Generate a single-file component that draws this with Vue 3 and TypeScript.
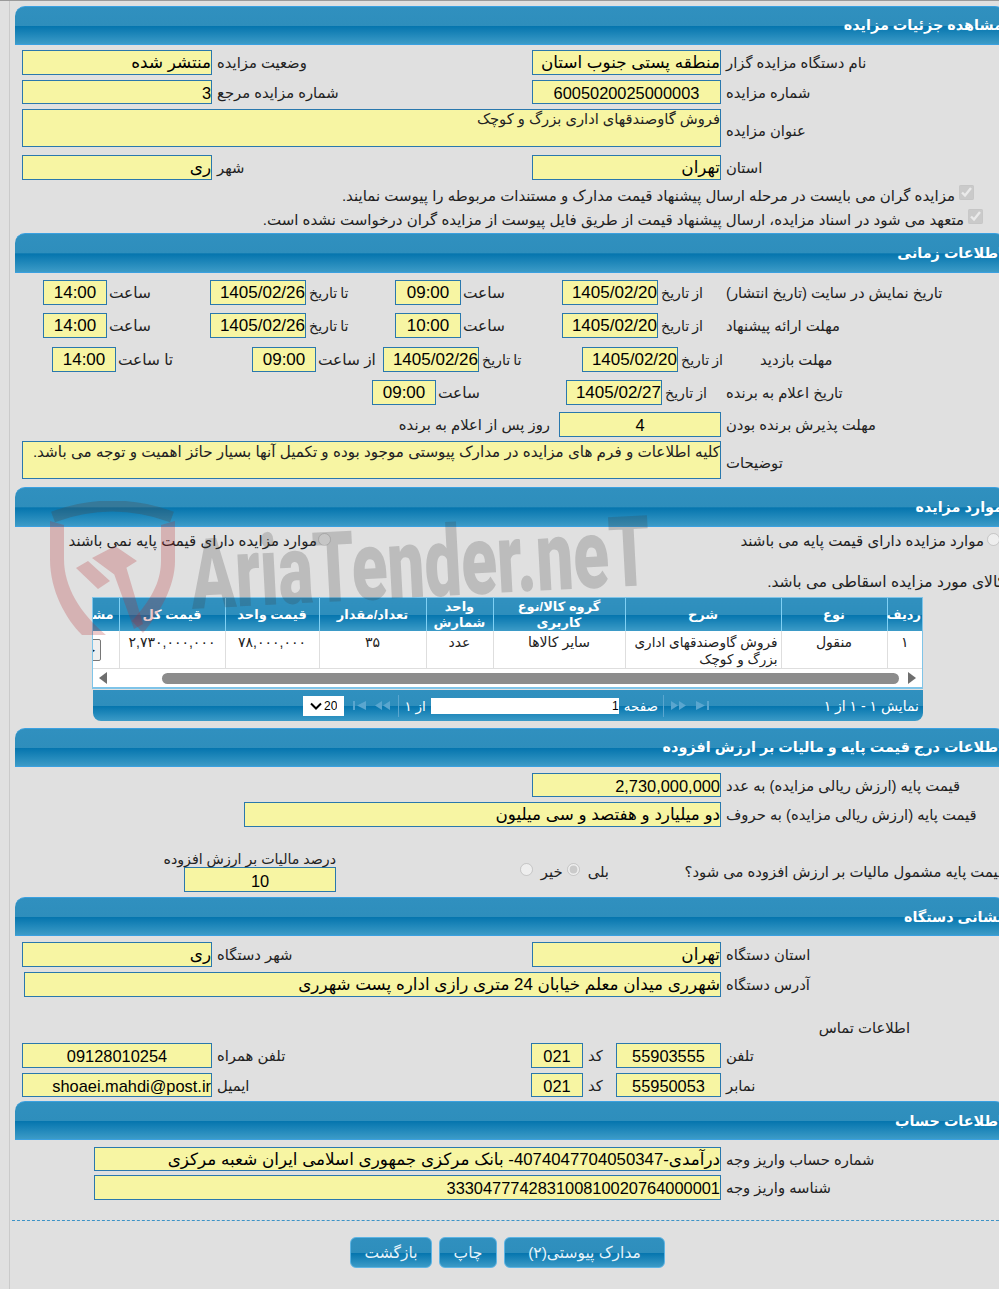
<script setup lang="ts">
type Item = { w: number; t?: string; f?: boolean; a?: 'c' | 'r'; lr?: boolean }
type Row = { mt: number; h: number; items: Item[] }
const L = (w: number, t = ''): Item => ({ w, t })
const F = (w: number, t: string, a?: 'c' | 'r'): Item => ({ w, t, f: true, a })

const g1: Row[] = [
  { mt: 5, h: 25, items: [L(284, 'نام دستگاه مزایده گزار'), F(189, 'منطقه پستی جنوب استان'), L(320, 'وضعیت مزایده'), F(190, 'منتشر شده')] },
  { mt: 5, h: 24, items: [L(284, 'شماره مزایده'), F(189, '6005020025000003', 'c'), L(320, 'شماره مزایده مرجع'), F(190, '3')] },
  { mt: 5, h: 38, items: [L(284, 'عنوان مزایده'), F(699, 'فروش گاوصندقهای اداری بزرگ و کوچک', 'r')] },
  { mt: 8, h: 25, items: [L(284, 'استان'), F(189, 'تهران'), L(320, 'شهر'), F(190, 'ری')] }
]
const g2: Row[] = [
  { mt: 7, h: 25, items: [L(284, 'تاریخ نمایش در سایت (تاریخ انتشار)'), L(63, 'از تاریخ'), F(96, '1405/02/20'), L(101, 'ساعت'), F(66, '09:00', 'c'), L(89, 'تا تاریخ'), F(96, '1405/02/26'), L(103, 'ساعت'), F(64, '14:00', 'c')] },
  { mt: 8, h: 25, items: [L(284, 'مهلت ارائه پیشنهاد'), L(63, 'از تاریخ'), F(96, '1405/02/20'), L(101, 'ساعت'), F(66, '10:00', 'c'), L(89, 'تا تاریخ'), F(96, '1405/02/26'), L(103, 'ساعت'), F(64, '14:00', 'c')] },
  { mt: 9, h: 25, items: [L(250, 'مهلت بازدید'), L(77, 'از تاریخ'), F(96, '1405/02/20'), L(103, 'تا تاریخ'), F(96, '1405/02/26'), L(67, 'از ساعت'), F(64, '09:00', 'c'), L(136, 'تا ساعت'), F(64, '14:00', 'c')] },
  { mt: 8, h: 25, items: [L(284, 'تاریخ اعلام به برنده'), L(59, 'از تاریخ'), F(96, '1405/02/27'), L(130, 'ساعت'), F(64, '09:00', 'c')] },
  { mt: 7, h: 25, items: [L(284, 'مهلت پذیرش برنده بودن'), F(162, '4', 'c'), { w: 200, t: 'روز پس از اعلام به برنده', lr: true }] },
  { mt: 4, h: 38, items: [L(284, 'توضیحات'), F(699, 'کلیه اطلاعات و فرم های مزایده در مدارک پیوستی موجود بوده و تکمیل آنها بسیار حائز اهمیت و توجه می باشد.', 'r')] }
]
const g4: Row[] = [
  { mt: 6, h: 24, items: [L(284, 'قیمت پایه (ارزش ریالی مزایده) به عدد'), F(189, '2,730,000,000')] },
  { mt: 5, h: 25, items: [L(284, 'قیمت پایه (ارزش ریالی مزایده) به حروف'), F(477, 'دو میلیارد و هفتصد و سی میلیون')] }
]
const g5a: Row[] = [
  { mt: 6, h: 25, items: [L(284, 'استان دستگاه'), F(189, 'تهران'), L(320, 'شهر دستگاه'), F(190, 'ری')] },
  { mt: 5, h: 25, items: [L(284, 'آدرس دستگاه'), F(697, 'شهرری میدان معلم خیابان 24 متری رازی اداره پست شهرری')] }
]
const g5b: Row[] = [
  { mt: 5, h: 25, items: [L(284, 'تلفن'), F(105, '55903555', 'c'), L(33, 'کد'), F(52, '021', 'c'), L(319, 'تلفن همراه'), F(190, '09128010254', 'c')] },
  { mt: 5, h: 24, items: [L(284, 'نمابر'), F(105, '55950053', 'c'), L(33, 'کد'), F(52, '021', 'c'), L(319, 'ایمیل'), F(190, 'shoaei.mahdi@post.ir')] }
]
const g6: Row[] = [
  { mt: 7, h: 24, items: [L(284, 'شماره حساب واریز وجه'), F(627, 'درآمدی-407404770405034' + '7- بانک مرکزی جمهوری اسلامی ایران شعبه مرکزی')] },
  { mt: 4, h: 25, items: [L(284, 'شناسه واریز وجه'), F(627, '333047774283100810020764000001')] }
]

function cellClass(c: Item) {
  const t = c.t ?? ''
  return {
    fld: c.f,
    lab: !c.f && !c.lr,
    lr: c.lr,
    center: c.a === 'c',
    plain: c.a === 'r',
    long: t.length > 50,
    ascii: c.f && /^[\x00-\x7f]+$/.test(t),
    stamp: c.f && /[/:]/.test(t),
    short: !c.f && c.w < 110 && t.endsWith('تاریخ'),
    hour: !c.f && t.endsWith('ساعت')
  }
}

const cols = [35, 106, 156, 132, 67, 107, 94, 106, 61]
const heads = ['ردیف', 'نوع', 'شرح', 'گروه کالا/نوع کاربری', 'واحد شمارش', 'تعداد/مقدار', 'قیمت واحد', 'قیمت کل', 'مشاهده']
const cells = ['۱', 'منقول', 'فروش گاوصندقهای اداری بزرگ و کوچک', 'سایر کالاها', 'عدد', '۳۵', '۷۸,۰۰۰,۰۰۰', '۲,۷۳۰,۰۰۰,۰۰۰']
</script>

<template>
  <div class="page">
    <div class="frame">
      <section class="sec first">
        <h2 class="bar">مشاهده جزئیات مزایده</h2>
        <div v-for="(r, i) in g1" :key="i" class="row" :class="{ tall: r.h > 30 }" :style="{ marginTop: r.mt + 'px', height: r.h + 'px' }">
          <div v-for="(c, j) in r.items" :key="j" :class="cellClass(c)" :style="{ width: c.w + 'px' }">{{ c.t }}</div>
        </div>
        <label class="chk one"><input type="checkbox" checked disabled /><span>مزایده گران می بایست در مرحله ارسال پیشنهاد قیمت مدارک و مستندات مربوطه را پیوست نمایند.</span></label>
        <label class="chk two"><input type="checkbox" checked disabled /><span>متعهد می شود در اسناد مزایده، ارسال پیشنهاد قیمت از طریق فایل پیوست از مزایده گران درخواست نشده است.</span></label>
      </section>

      <section class="sec s2">
        <h2 class="bar big">اطلاعات زمانی</h2>
        <div v-for="(r, i) in g2" :key="i" class="row" :class="{ tall: r.h > 30 }" :style="{ marginTop: r.mt + 'px', height: r.h + 'px' }">
          <div v-for="(c, j) in r.items" :key="j" :class="cellClass(c)" :style="{ width: c.w + 'px' }">{{ c.t }}</div>
        </div>
      </section>

      <section class="sec s3">
        <h2 class="bar big">موارد مزایده</h2>
        <div class="radios">
          <label class="rad"><input type="radio" name="base" disabled /><span>موارد مزایده دارای قیمت پایه می باشند</span></label>
          <label class="rad"><input type="radio" name="base" disabled /><span>موارد مزایده دارای قیمت پایه نمی باشند</span></label>
        </div>
        <p class="note">کالای مورد مزایده اسقاطی می باشد.</p>
        <div class="gridbox">
          <div class="tscroll">
            <table class="tbl">
              <colgroup><col v-for="(w, i) in cols" :key="i" :style="{ width: w + 'px' }" /></colgroup>
              <thead><tr><th v-for="h in heads" :key="h">{{ h }}</th></tr></thead>
              <tbody>
                <tr>
                  <td v-for="(c, i) in cells" :key="i" :class="{ desc: i === 2 }">{{ c }}</td>
                  <td class="act"><button class="mini" type="button" disabled>جزئیات</button></td>
                </tr>
              </tbody>
            </table>
          </div>
          <div class="hscroll">
            <svg class="arr" width="8" height="12" viewBox="0 0 8 12"><path d="M0 0 8 6 0 12Z" fill="#6e6e6e" /></svg>
            <div class="thumb"></div>
            <svg class="arr end" width="8" height="12" viewBox="0 0 8 12"><path d="M8 0 0 6 8 12Z" fill="#6e6e6e" /></svg>
          </div>
        </div>
        <div class="pager">
          <span class="info">نمایش ۱ - ۱ از ۱</span>
          <div class="pg-center">
            <svg class="pi" width="15" height="9" viewBox="0 0 15 9"><path d="M0 0 9 4.500 0 9ZM11 0h2v9h-2Z" fill="#5aa6cf" /></svg>
            <svg class="pi" width="16" height="9" viewBox="0 0 16 9"><path d="M0 0 7 4.500 0 9ZM8 0 15 4.500 8 9Z" fill="#5aa6cf" /></svg>
            <i class="sep"></i>
            <span>صفحه</span>
            <div class="pg-input">1</div>
            <span>از ۱</span>
            <i class="sep"></i>
            <svg class="pi" width="16" height="9" viewBox="0 0 16 9"><path d="M15 0 8 4.500 15 9ZM7 0 0 4.500 7 9Z" fill="#5aa6cf" /></svg>
            <svg class="pi" width="15" height="9" viewBox="0 0 15 9"><path d="M15 0 6 4.500 15 9ZM2 0h2v9H2Z" fill="#5aa6cf" /></svg>
            <div class="pg-wrap">
              <select class="pg-sel"><option>20</option></select>
              <svg class="chev" width="12" height="8" viewBox="0 0 12 8"><path d="M1 1.500 6 6.500 11 1.500" fill="none" stroke="#000" stroke-width="2" /></svg>
            </div>
          </div>
        </div>
      </section>

      <section class="sec s4">
        <h2 class="bar">اطلاعات درج قیمت پایه و مالیات بر ارزش افزوده</h2>
        <div v-for="(r, i) in g4" :key="i" class="row" :style="{ marginTop: r.mt + 'px', height: r.h + 'px' }">
          <div v-for="(c, j) in r.items" :key="j" :class="cellClass(c)" :style="{ width: c.w + 'px' }">{{ c.t }}</div>
        </div>
        <div class="vat">
          <span class="vat-q">قیمت پایه مشمول مالیات بر ارزش افزوده می شود؟</span>
          <label class="vr yes"><span>بلی</span><input type="radio" name="vat" checked disabled /></label>
          <label class="vr"><span>خیر</span><input type="radio" name="vat" disabled /></label>
          <div class="vat-box">
            <span>درصد مالیات بر ارزش افزوده</span>
            <div class="fld center ascii">10</div>
          </div>
        </div>
      </section>

      <section class="sec s5">
        <h2 class="bar">نشانی دستگاه</h2>
        <div v-for="(r, i) in g5a" :key="i" class="row" :style="{ marginTop: r.mt + 'px', height: r.h + 'px' }">
          <div v-for="(c, j) in r.items" :key="j" :class="cellClass(c)" :style="{ width: c.w + 'px' }">{{ c.t }}</div>
        </div>
        <p class="contact">اطلاعات تماس</p>
        <div v-for="(r, i) in g5b" :key="i" class="row" :style="{ marginTop: r.mt + 'px', height: r.h + 'px' }">
          <div v-for="(c, j) in r.items" :key="j" :class="cellClass(c)" :style="{ width: c.w + 'px' }">{{ c.t }}</div>
        </div>
      </section>

      <section class="sec s6">
        <h2 class="bar">اطلاعات حساب</h2>
        <div v-for="(r, i) in g6" :key="i" class="row" :style="{ marginTop: r.mt + 'px', height: r.h + 'px' }">
          <div v-for="(c, j) in r.items" :key="j" :class="cellClass(c)" :style="{ width: c.w + 'px' }">{{ c.t }}</div>
        </div>
      </section>

      <div class="actions">
        <button class="btn b1" type="button">مدارک پیوستی(۲)</button>
        <button class="btn b2" type="button">چاپ</button>
        <button class="btn b3" type="button">بازگشت</button>
      </div>
    </div>

    <div class="wm" aria-hidden="true">
      <svg class="wm-shield" width="130" height="140" viewBox="0 0 130 140">
        <path d="M3 16Q62 -6 122 16" fill="none" stroke="#4a4a4a" stroke-opacity=".3" stroke-width="11" />
        <path d="M0 20V58C0 90 16 118 32 134H56C30 112 14 86 14 58V24Z" fill="#b4262c" fill-opacity=".25" />
        <path d="M111 24 125 20V60C125 85 110 112 93 132L82 120C100 100 111 82 111 60Z" fill="#b4262c" fill-opacity=".25" />
        <path d="M26 67 38 60 60 80 48 88ZM42 57 65 45 87 60 65 74ZM63 70 75 62 93 123 84 128Z" fill="#b4262c" fill-opacity=".25" />
      </svg>
      <span class="wm-text">AriaTender.neT</span>
    </div>
  </div>
</template>

<style>
html, body { margin: 0; background: #e0e0e0; }
</style>

<style scoped>
.page {
  position: relative;
  width: 999px;
  height: 1289px;
  overflow: hidden;
  background: #e0e0e0;
  border-top: 1px solid #9a9a9a;
  box-sizing: border-box;
  font-family: "Liberation Sans", "DejaVu Sans", sans-serif;
  font-size: 14.8px;
  color: #222;
  direction: rtl;
}
.frame {
  width: 996px;
  margin-right: -6px;
  border-left: 1px solid #cacaca;
  padding-left: 5px;
  padding-top: 5px;
  box-sizing: border-box;
  height: 1288px;
}
.sec { width: 990px; }
.bar {
  margin: 0;
  height: 39px;
  box-sizing: border-box;
  border-top: 1px solid #3aa0e0;
  border-bottom: 1px solid #3aa0e0;
  border-radius: 10px 10px 0 0;
  background: linear-gradient(#3090bf 0, #2e8ebc 50%, #0575ae 52%, #3c9bc7 100%);
  color: #fff;
  font-size: 14.4px;
  font-weight: 700;
  line-height: 38px;
  padding-right: 2px;
  white-space: nowrap;
  overflow: hidden;
}
.bar.big { height: 40px; }
.first .bar, .s4 .bar { line-height: 37px; }
.row { display: flex; align-items: stretch; }
.row > div { flex: none; box-sizing: border-box; white-space: nowrap; }
.lab { padding-left: 5px; display: flex; align-items: center; justify-content: flex-end; }
.lab.short { padding-left: 3px; font-size: 14.2px; word-spacing: -1px; }
.lab.hour { padding-left: 2px; font-size: 15.4px; }
.tall .lab { padding-top: 4px; }
.lr { display: flex; align-items: center; padding-right: 9px; }
.fld {
  box-sizing: border-box;
  border: 1px solid #2a78ad;
  background: #f7f5a3;
  color: #000;
  font-size: 16.8px;
  line-height: 24px;
  overflow: hidden;
  white-space: nowrap;
}
.fld.ascii { font-size: 16.4px; }
.fld.stamp { font-size: 17px; }
.fld.center { text-align: center; }
.fld.plain { font-size: 14.7px; white-space: normal; color: #222; line-height: 19px; }
.fld.plain.long { font-size: 15.2px; }
.chk { display: flex; align-items: center; height: 24px; font-size: 15px; white-space: nowrap; }
.chk input { width: 15px; height: 15px; margin: 0 0 8px 4px; }
.chk.one { margin-top: 4px; padding-right: 31px; }
.chk.two { padding-right: 22px; }
.s2 { margin-top: 1px; }
.s3 { margin-top: 8px; }
.radios { display: flex; height: 22px; margin-top: 3px; align-items: center; padding-right: 5px; font-size: 15px; }
.rad { display: flex; align-items: center; white-space: nowrap; }
.rad:first-child { width: 669px; flex: none; }
.rad input { width: 13px; height: 13px; margin: 0 0 3px 3px; }
.rad + .rad input { margin-left: 1px; }
.note { margin: 20px 0 0; height: 20px; line-height: 20px; font-size: 15.5px; }
.gridbox {
  margin: 5px 82px 0 0;
  width: 831px;
  box-sizing: border-box;
  border: 1px solid #7fc4e8;
  border-bottom-width: 2px;
  background: #fff;
}
.tscroll { overflow: hidden; width: 829px; }
.tbl { table-layout: fixed; border-collapse: collapse; width: 864px; background: #fff; }
.tbl th {
  height: 33px;
  padding: 0 1px;
  color: #fff;
  font-size: 13px;
  line-height: 16px;
  font-weight: 700;
  border-left: 1px solid #7fd0f4;
  background: linear-gradient(#3090bf 0, #2e8ebc 50%, #0575ae 52%, #3c9bc7 100%);
}
.tbl td {
  height: 36px;
  padding: 3px 3px 0;
  text-align: center;
  vertical-align: top;
  font-size: 14px;
  line-height: 17px;
  border-left: 1px solid #dedede;
  border-bottom: 1px solid #dedede;
  overflow: hidden;
  box-sizing: border-box;
}
.tbl td.desc { text-align: right; font-size: 13.6px; }
.tbl td.act { padding: 0; }
.mini {
  display: block;
  width: 46px;
  height: 22px;
  padding: 0;
  font: 12px "DejaVu Sans", sans-serif;
  background: #efefef;
  border: 1px solid #777;
  border-radius: 2px;
  margin: 8px 18px 0 0;
  color: #222;
}
.hscroll { height: 18px; display: flex; align-items: center; padding: 0 6px; gap: 9px; }
.thumb { width: 737px; height: 11px; border-radius: 6px; background: #8c8c8c; }
.arr.end { margin-right: auto; }
.pager {
  margin: 1px 82px 0 0;
  width: 830px;
  height: 31px;
  box-sizing: border-box;
  border-radius: 0 0 8px 8px;
  background: linear-gradient(#3090bf 0, #2e8ebc 50%, #0575ae 52%, #3c9bc7 100%);
  color: #fff;
  font-size: 13.5px;
  display: flex;
  align-items: center;
  padding-right: 4px;
}
.info { white-space: nowrap; width: 206px; font-size: 14px; }
.pg-center { display: flex; align-items: center; gap: 5px; white-space: nowrap; }
.sep { width: 1px; height: 22px; background: #5aa6cf; }
.pi { margin: 0 2px; }
.pg-input { width: 188px; height: 16px; background: #fff; color: #000; font: 12px/16px "Liberation Sans", sans-serif; text-align: right; }
.pg-wrap { position: relative; width: 41px; height: 20px; }
.pg-sel {
  appearance: none;
  display: block;
  width: 41px;
  height: 20px;
  border: 0;
  border-radius: 0;
  background: #fff;
  color: #000;
  font: 12px "Liberation Sans", sans-serif;
  padding: 0 7px 0 0;
  direction: rtl;
}
.chev { position: absolute; left: 7px; top: 6px; pointer-events: none; }
.s4 { margin-top: 7px; }
.vat { display: flex; height: 42px; margin-top: 23px; align-items: center; position: relative; white-space: nowrap; }
.vat-q { width: 320px; flex: none; }
.vr { display: flex; align-items: center; gap: 8px; flex: none; }
.vr input { width: 13px; height: 13px; margin: 0 0 4px 0; }
.vr.yes { margin-right: 76px; margin-left: 4px; }
.vat-box { position: absolute; left: 169px; top: 0; width: 152px; text-align: right; line-height: 18px; height: 42px; font-size: 14.2px; }
.vat-box span { display: block; height: 17px; }
.vat-box .fld { height: 25px; width: 152px; line-height: 26px; }
.s5 { margin-top: 5px; }
.contact { margin: 21px 0 0; height: 20px; line-height: 20px; padding-right: 95px; }
.s6 { margin-top: 4px; }
.actions {
  margin: 20px 6px 0 0;
  width: 987px;
  border-top: 1px dashed #3d93c7;
  padding: 16px 334px 0 0;
  box-sizing: border-box;
  display: flex;
  gap: 7px;
}
.btn {
  height: 31px;
  border: 1px solid #5db4e4;
  border-radius: 6px;
  background: linear-gradient(#3090bf 0, #2e8ebc 50%, #0575ae 52%, #3c9bc7 100%);
  color: #e8f4fa;
  font: 15.5px "Liberation Sans", "DejaVu Sans", sans-serif;
  padding: 0;
}
.b1 { width: 161px; }
.b2 { width: 58px; }
.b3 { width: 82px; }
.wm { position: absolute; left: 50px; top: 500px; width: 620px; height: 150px; pointer-events: none; direction: ltr; }
.wm-shield { position: absolute; left: 0; top: 0; }
.wm-text {
  position: absolute;
  left: 138px;
  top: 26px;
  font: 900 98px/1 Roboto, sans-serif;
  color: rgba(60, 60, 60, 0.22);
  white-space: nowrap;
  transform-origin: left top;
  transform: rotate(-3deg) scaleX(0.67);
}
</style>
